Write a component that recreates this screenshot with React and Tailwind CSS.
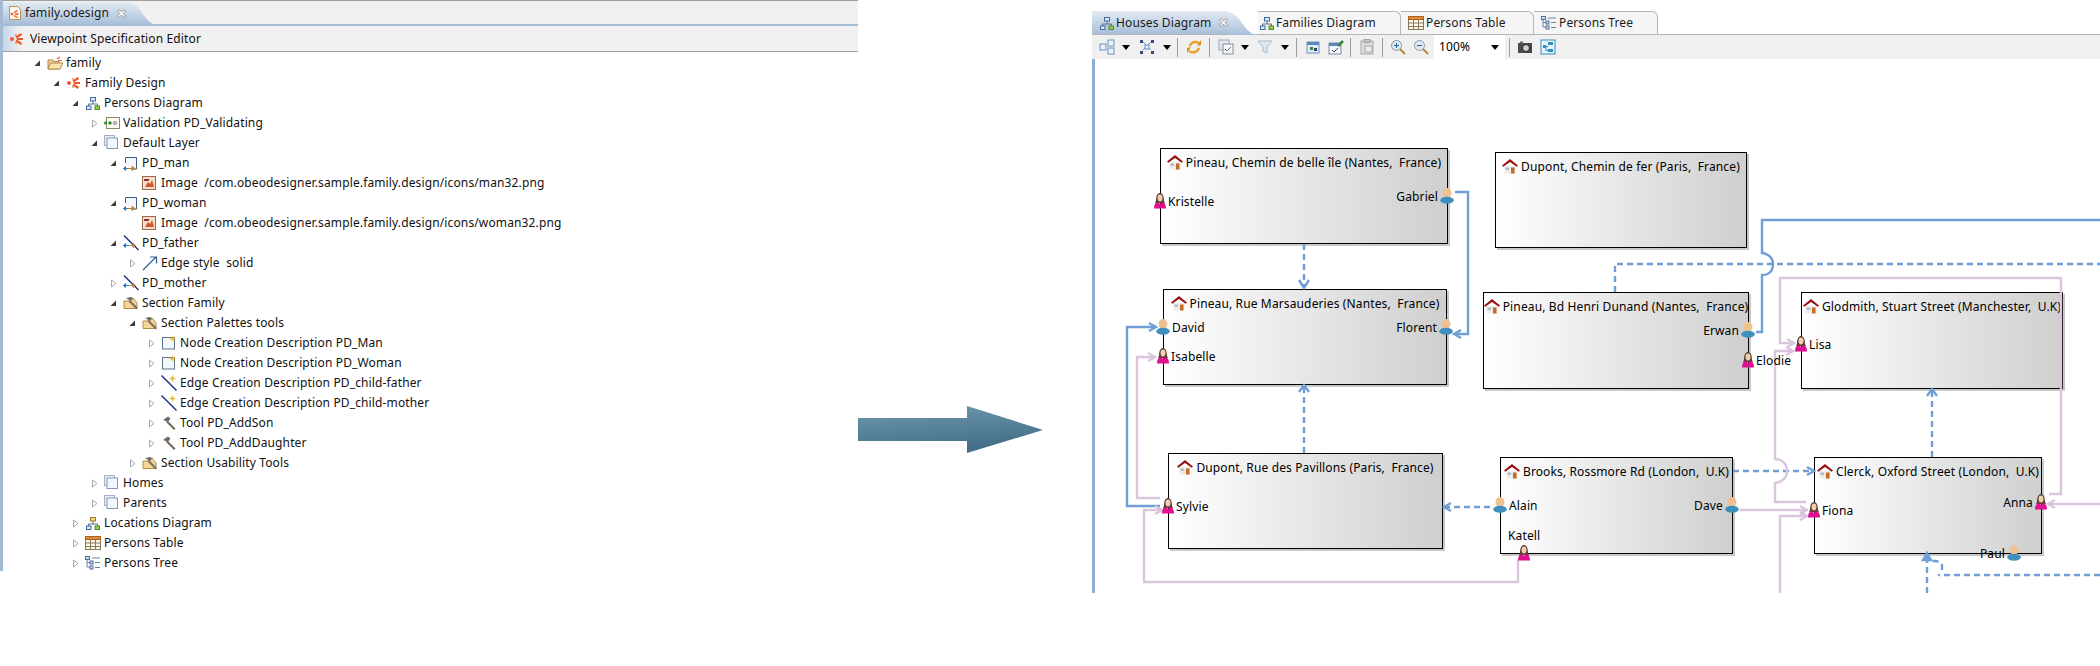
import React from 'react';

const FONT = "font-['Noto_Sans','Open_Sans',sans-serif]";
const BLUE = '#709ed6';
const PINK = '#dac6dc';

// ---- small drawn icons

const TwistyOpen = () => (
  <svg width="9" height="9" viewBox="0 0 9 9" className="shrink-0">
    <path d="M7 1.500V7H1.500z" fill="#3c3c3c" />
  </svg>
);

const TwistyClosed = () => (
  <svg width="9" height="9" viewBox="0 0 9 9" className="shrink-0">
    <path d="M2.500 1v7L7 4.500z" fill="#fff" stroke="#a8a8a8" />
  </svg>
);

const Odesign = () => (
  <svg width="16" height="16" viewBox="0 0 16 16">
    <circle cx="3" cy="8" r="2" fill="#ee5a30" />
    <path d="M7 6.500 12.500 3M8 8h6M7 9.500l5.500 3.500" stroke="#ee5a30" strokeWidth="2.200" fill="none" />
    <circle cx="7" cy="4" r="1" fill="#f58b5f" />
    <circle cx="7" cy="12" r="1" fill="#f58b5f" />
  </svg>
);

const OdesignFile = () => (
  <svg width="16" height="16" viewBox="0 0 16 16" className="shrink-0">
    <path d="M2.500 1.500h8l3 3v10h-11z" fill="#fdf6ea" stroke="#b9955d" />
    <circle cx="5" cy="9" r="1.300" fill="#ee5a30" />
    <path d="M7 7.500l3.500-2M8 9h3.500M7 10.500l3.500 2" stroke="#ee5a30" strokeWidth="1.400" />
  </svg>
);

const Folder = () => (
  <svg width="16" height="16" viewBox="0 0 16 16">
    <path d="M1 5h5l1 1.500h5V14H1z" fill="#f3cf8c" stroke="#b08a4a" />
    <path d="M1 14l2.500-6H16l-3 6z" fill="#fbe3b0" stroke="#b08a4a" />
    <path d="M10 4l3-2M11 5.500h4" stroke="#ee5a30" strokeWidth="1.200" />
  </svg>
);

const DiagramIcon = ({ amber }) => (
  <svg width="16" height="16" viewBox="0 0 16 16" className="shrink-0">
    <path d="M8 6v3M3.500 11V9h9v2" stroke="#5a6f8c" fill="none" />
    <rect x="5.500" y="2.500" width="5" height="3.500" fill={amber ? '#f6d58a' : '#dbe8f7'} stroke={amber ? '#a27a2c' : '#3e6aa0'} />
    <rect x="1.500" y="11" width="4.500" height="3.500" fill="#dbe8f7" stroke="#3e6aa0" />
    <rect x="10" y="11" width="4.500" height="3.500" fill="#8fd04f" stroke="#4c8a2a" />
  </svg>
);

const ValidationIcon = () => (
  <svg width="16" height="16" viewBox="0 0 16 16">
    <rect x="2.500" y="2.500" width="13" height="11" fill="#fbfbf4" stroke="#8a8a62" />
    <circle cx="1.500" cy="8" r="1.500" fill="#2b8a2b" />
    <circle cx="6" cy="8" r="1.700" fill="#2b8a2b" />
    <circle cx="11" cy="8" r="1.700" fill="#8c8c8c" fillOpacity="0.500" stroke="#666" strokeWidth="0.500" />
  </svg>
);

const LayerIcon = () => (
  <svg width="16" height="16" viewBox="0 0 16 16">
    <rect x="0.500" y="0.500" width="10" height="10" fill="#e9eef6" stroke="#a4b1c8" />
    <rect x="3" y="3" width="10.500" height="10.500" fill="#f0f7fd" stroke="#8898b4" />
  </svg>
);

const ContainerMapping = () => (
  <svg width="16" height="16" viewBox="0 0 16 16">
    <path d="M2.500 8V2.500h11V14H8" fill="#f3f7fc" stroke="#3f5f86" />
    <path d="M1 13.500h4M2.500 11.500l-2 2 2 2z" stroke="#1e7fd0" fill="#1e7fd0" />
    <path d="M4.500 13.500h6M9 11.500l3 2-3 2z" stroke="#b9803a" fill="#b9803a" />
  </svg>
);

const EdgeMapping = () => (
  <svg width="16" height="16" viewBox="0 0 16 16">
    <path d="M1 .5 15.500 15" stroke="#1b2f7e" strokeWidth="1.400" />
    <path d="M1 10.500h5M2.500 8.500l-2 2 2 2z" stroke="#1e7fd0" fill="#1e7fd0" />
    <path d="M6.500 10.500h5M10 8.500l2.500 2-2.500 2z" stroke="#b9803a" fill="#b9803a" />
  </svg>
);

const ImageStyle = () => (
  <svg width="14" height="14" viewBox="0 0 14 14">
    <rect x="0.500" y="0.500" width="13" height="13" fill="#f7ddc8" stroke="#9c6a4c" />
    <path d="M3 11l3-5 2 2 2-4 2 7z" fill="#d9532c" />
    <path d="M2 3h5v2H2z" fill="#8a3b2c" />
  </svg>
);

const EdgeStyle = () => (
  <svg width="16" height="16" viewBox="0 0 16 16">
    <path d="M1 15 14 2M8 2h6.500v6.500" stroke="#2a5e96" fill="none" strokeWidth="1.200" />
  </svg>
);

const Section = () => (
  <svg width="16" height="16" viewBox="0 0 16 16">
    <path d="M1 6h5l1-3h3l4 5v5.500H1z" fill="#f6d694" stroke="#b58a45" />
    <path d="M3 3l5-1 2 2-2 2z" fill="#6c6c6c" />
    <path d="M7 5l8 8-1.500 1.500-8-8z" fill="#7c6f63" />
  </svg>
);

const NodeCreation = () => (
  <svg width="16" height="16" viewBox="0 0 16 16">
    <rect x="1.500" y="2.500" width="12" height="11.500" fill="#f2f7fc" stroke="#5f7286" />
    <path d="M11.500 0l1 2.500 2.500 1-2.500 1-1 2.500-1-2.500-2.500-1 2.500-1z" fill="#e8b93a" />
  </svg>
);

const EdgeCreation = () => (
  <svg width="16" height="16" viewBox="0 0 16 16">
    <path d="M.5 .5 15.500 15.500" stroke="#1b2f7e" strokeWidth="1.400" />
    <path d="M11.500 0l1 2.500 2.500 1-2.500 1-1 2.500-1-2.500-2.500-1 2.500-1z" fill="#e8b93a" />
  </svg>
);

const Hammer = () => (
  <svg width="16" height="16" viewBox="0 0 16 16">
    <path d="M2 5l5-3.500 2.500 2L7 7z" fill="#6a6a6a" />
    <path d="M6.500 5.500l8 8L13 15 5 7z" fill="#7a6a58" />
  </svg>
);

const TableIcon = () => (
  <svg width="16" height="14" viewBox="0 0 16 14" className="shrink-0">
    <rect x="0.500" y="0.500" width="15" height="13" fill="#faf5e6" stroke="#8a7a5a" />
    <rect x="0.500" y="0.500" width="15" height="3" fill="#e08a3a" stroke="#a8641f" />
    <path d="M5.500 3.500v10M10.500 3.500v10M.5 7h15M.5 10.500h15" stroke="#8a7a5a" />
  </svg>
);

const TreeIcon = () => (
  <svg width="16" height="14" viewBox="0 0 16 14" className="shrink-0">
    <path d="M2 2v9h3M2 6.500h3" stroke="#6f8099" fill="none" />
    <rect x="0.500" y="0.500" width="4" height="3" fill="#cfe0f4" stroke="#4a6f9c" />
    <rect x="5" y="5" width="3" height="3" fill="#cfe0f4" stroke="#4a6f9c" />
    <rect x="5" y="10" width="3" height="3" fill="#cfe0f4" stroke="#4a6f9c" />
    <path d="M7 2h8M10 6.500h5M10 11.500h5" stroke="#6f8099" />
  </svg>
);

const CloseIcon = () => (
  <svg width="11" height="11" viewBox="0 0 11 11" className="shrink-0">
    <path d="M1.500 3 3 1.500l2.500 2.500L8 1.500 9.500 3 7 5.500 9.500 8 8 9.500 5.500 7 3 9.500 1.500 8 4 5.500z" fill="#fff" stroke="#8a8a8a" strokeWidth="0.900" />
  </svg>
);

const House = () => (
  <svg width="16" height="15" viewBox="0 0 16 15" className="shrink-0">
    <path d="M2.500 7v7.500h11V7z" fill="#ececec" />
    <path d="M8 3 2.500 7h11z" fill="#fff" />
    <path d="M0 6.500 8 0l8 6.500-1.300 1.300L8 3 1.300 7.800z" fill="#9a1010" />
    <rect x="9" y="8.500" width="3.500" height="6" fill="#c66a26" />
    <rect x="3.500" y="8.500" width="3.500" height="2.500" fill="#b4bcc6" />
  </svg>
);

const Man = () => (
  <svg width="14" height="16" viewBox="0 0 14 16" className="shrink-0">
    <ellipse cx="7" cy="5" rx="4.500" ry="5" fill="#eec193" />
    <ellipse cx="7" cy="12.200" rx="6.800" ry="3.500" fill="#3f8fbe" />
  </svg>
);

const Woman = () => (
  <svg width="12" height="16" viewBox="0 0 12 16" className="shrink-0">
    <path d="M2 8c0-6 2-8 4-8s4 2 4 8l1 2H1z" fill="#5a4034" />
    <ellipse cx="6" cy="5" rx="2.500" ry="3.400" fill="#f2cdb0" />
    <path d="M0 15.500c0-4 1.500-6 3.500-6.500L6 11l2.500-2c2 .5 3.500 2.500 3.500 6.500z" fill="#df0f90" />
  </svg>
);

// the selected tab with its curved right side
const ActiveTab = ({ id, bodyClass, children }) => (
  <div className="flex h-full shrink-0 items-end">
    <div className={`flex h-full shrink-0 items-center whitespace-nowrap bg-linear-to-b from-[#e4ebf4] to-[#a8bfd9] ${bodyClass}`}>{children}</div>
    <svg width="30" height="23" viewBox="0 0 30 23" className="-mb-px shrink-0">
      <defs>
        <linearGradient id={id} x1="0" y1="0" x2="0" y2="1">
          <stop offset="0" stopColor="#e4ebf4" />
          <stop offset="1" stopColor="#a8bfd9" />
        </linearGradient>
      </defs>
      <path d="M0 0C13 0 15 22 30 23H0z" fill={`url(#${id})`} />
    </svg>
  </div>
);

// ---- tree on the left

const TREE = [
  [0, 'open', Folder, 'family'],
  [1, 'open', Odesign, 'Family Design'],
  [2, 'open', DiagramIcon, 'Persons Diagram'],
  [3, 'closed', ValidationIcon, 'Validation PD_Validating'],
  [3, 'open', LayerIcon, 'Default Layer'],
  [4, 'open', ContainerMapping, 'PD_man'],
  [5, null, ImageStyle, 'Image  /com.obeodesigner.sample.family.design/icons/man32.png'],
  [4, 'open', ContainerMapping, 'PD_woman'],
  [5, null, ImageStyle, 'Image  /com.obeodesigner.sample.family.design/icons/woman32.png'],
  [4, 'open', EdgeMapping, 'PD_father'],
  [5, 'closed', EdgeStyle, 'Edge style  solid'],
  [4, 'closed', EdgeMapping, 'PD_mother'],
  [4, 'open', Section, 'Section Family'],
  [5, 'open', Section, 'Section Palettes tools'],
  [6, 'closed', NodeCreation, 'Node Creation Description PD_Man'],
  [6, 'closed', NodeCreation, 'Node Creation Description PD_Woman'],
  [6, 'closed', EdgeCreation, 'Edge Creation Description PD_child-father'],
  [6, 'closed', EdgeCreation, 'Edge Creation Description PD_child-mother'],
  [6, 'closed', Hammer, 'Tool PD_AddSon'],
  [6, 'closed', Hammer, 'Tool PD_AddDaughter'],
  [5, 'closed', Section, 'Section Usability Tools'],
  [3, 'closed', LayerIcon, 'Homes'],
  [3, 'closed', LayerIcon, 'Parents'],
  [2, 'closed', () => <DiagramIcon amber />, 'Locations Diagram'],
  [2, 'closed', TableIcon, 'Persons Table'],
  [2, 'closed', TreeIcon, 'Persons Tree'],
];

const TreeRow = ({ depth, twisty, Icon, label }) => (
  <div className="flex h-5 items-center" style={{ paddingLeft: 30 + depth * 19 }}>
    <span className="flex w-[14px] shrink-0 items-center">
      {twisty === 'open' && <TwistyOpen />}
      {twisty === 'closed' && <TwistyClosed />}
    </span>
    <span className="flex w-[19px] shrink-0 items-center"><Icon /></span>
    <span className="whitespace-pre">{label}</span>
  </div>
);

const EditorPanel = () => (
  <div className="flex h-[571px] w-[858px] shrink-0 flex-col border-l-[3px] border-[#a3b9d4]">
    <div className="h-[26px] shrink-0 border-t border-b-[2px] border-t-[#a0a0a0] border-b-[#a3bbd6] bg-[#f0f0f0] pt-px">
      <ActiveTab id="tabLeft" bodyClass="w-[125px] pl-[4px] text-[#1a1a1a]">
        <OdesignFile />
        <span className="ml-[2px]">family.odesign</span>
        <span className="ml-[7px]"><CloseIcon /></span>
      </ActiveTab>
    </div>
    <div className="flex h-[26px] shrink-0 items-center gap-[5px] border-b border-[#a0a0a0] bg-[#f0f0f0] bg-[linear-gradient(to_right,#c4d5e8,#f0f0f0_18px)] pl-[6px]">
      <Odesign />
      <span>Viewpoint Specification Editor</span>
    </div>
    <div className="shrink-0 pt-[1px]">
      {TREE.map(([depth, twisty, Icon, label], i) => (
        <TreeRow key={i} depth={depth} twisty={twisty} Icon={Icon} label={label} />
      ))}
    </div>
  </div>
);

// ---- arrow in the middle

const BigArrow = () => (
  <svg width="186" height="48" viewBox="0 0 186 48" className="mt-[406px] shrink-0">
    <defs>
      <linearGradient id="bigArrow" x1="0" y1="0" x2="0.300" y2="1">
        <stop offset="0" stopColor="#6e9ab0" />
        <stop offset="1" stopColor="#456d87" />
      </linearGradient>
    </defs>
    <path d="M0 12H109V0L185 24 109 47V35H0z" fill="url(#bigArrow)" />
  </svg>
);

// ---- diagram editor on the right

const InactiveTab = ({ children, className }) => (
  <div className={`flex h-full shrink-0 items-center gap-px whitespace-nowrap rounded-tr-md border-r border-[#b5b5b5] bg-[#f5f5f5] ${className}`}>{children}</div>
);

const ToolIcon = ({ children, className }) => (
  <svg width="16" height="16" viewBox="0 0 16 16" className={`shrink-0 ${className}`}>{children}</svg>
);

const Caret = ({ className }) => (
  <span className={`h-0 w-0 shrink-0 border-x-[4px] border-t-[5px] border-x-transparent border-t-black ${className}`} />
);
const Sep = ({ className }) => <span className={`h-[19px] w-px shrink-0 bg-[#9c9c9c] ${className}`} />;

const Toolbar = () => (
  <div className="flex h-[24px] items-center bg-[#f0f0f0] pl-[7px]">
    <ToolIcon><rect x="1" y="5" width="6" height="6" fill="#eaf2fb" stroke="#6d93bd" /><rect x="9" y="1" width="6" height="6" fill="#eaf2fb" stroke="#6d93bd" /><rect x="9" y="9" width="6" height="6" fill="#eaf2fb" stroke="#6d93bd" /></ToolIcon>
    <Caret className="ml-[7px]" />
    <ToolIcon className="ml-[9px]"><path d="M4 3l8 8M12 3 4 11" stroke="#6d93bd" /><rect x="1" y="1" width="3" height="3" fill="#34517c" /><rect x="12" y="1" width="3" height="3" fill="#34517c" /><rect x="6" y="6" width="4" height="4" fill="#eaf2fb" stroke="#6d93bd" /><rect x="1" y="12" width="3" height="3" fill="#34517c" /><rect x="12" y="12" width="3" height="3" fill="#34517c" /></ToolIcon>
    <Caret className="ml-[8px]" />
    <Sep className="ml-[6px]" />
    <ToolIcon className="ml-[8px]"><path d="M13 4A6.500 6.500 0 0 0 3.500 7M3 12a6.500 6.500 0 0 0 10-3" stroke="#e8a52a" strokeWidth="2.500" fill="none" /><path d="M11 7l4-1V1zM5 8l-4 1v5z" fill="#d98c1a" /></ToolIcon>
    <Sep className="ml-[7px]" />
    <ToolIcon className="ml-[8px]"><rect x="1" y="1" width="10" height="10" fill="#e3e8ef" stroke="#9aa6b8" /><rect x="5" y="5" width="10" height="10" fill="#f6f8fb" stroke="#7d8ba0" /><path d="M7 10l2 2 4-4" stroke="#5a7a5a" fill="none" /></ToolIcon>
    <Caret className="ml-[7px]" />
    <ToolIcon className="ml-[8px]"><path d="M1 2h14L10 8v6l-4-2V8z" fill="#dbe8f3" stroke="#a8bccf" /></ToolIcon>
    <Caret className="ml-[8px]" />
    <Sep className="ml-[7px]" />
    <ToolIcon className="ml-[8px]"><rect x="2" y="3" width="12" height="11" fill="#dfeaf6" stroke="#6d93bd" /><rect x="2" y="3" width="12" height="3" fill="#5c87b8" /><rect x="5" y="8" width="3" height="3" fill="#3a8a3a" /><rect x="9" y="9" width="3" height="3" fill="#25416d" /></ToolIcon>
    <ToolIcon className="ml-[7px]"><rect x="1" y="4" width="12" height="11" fill="#f4f7fb" stroke="#7d8ba0" /><rect x="1" y="4" width="12" height="3" fill="#5c87b8" /><path d="M4 11l2 2 4-4" stroke="#444" fill="none" /><path d="M9 6l5-5 2 2-5 5z" fill="#3a8a3a" /></ToolIcon>
    <Sep className="ml-[6px]" />
    <ToolIcon className="ml-[8px]"><rect x="2" y="2" width="12" height="13" fill="#dcdcdc" stroke="#a8a8a8" /><rect x="5" y="0.500" width="6" height="3" fill="#c4c4c4" stroke="#a0a0a0" /><rect x="6" y="7" width="7" height="6" fill="#ececec" stroke="#a8a8a8" /></ToolIcon>
    <Sep className="ml-[7px]" />
    <ToolIcon className="ml-[7px]"><circle cx="6.500" cy="6.500" r="5" fill="#dfe9f4" stroke="#8a9aae" /><path d="M4 6.500h5M6.500 4v5" stroke="#2c5f9c" /><path d="M10 10l5 5" stroke="#b5893f" strokeWidth="2" /></ToolIcon>
    <ToolIcon className="ml-[7px]"><circle cx="6.500" cy="6.500" r="5" fill="#dfe9f4" stroke="#8a9aae" /><path d="M4 6.500h5" stroke="#2c5f9c" /><path d="M10 10l5 5" stroke="#b5893f" strokeWidth="2" /></ToolIcon>
    <div className="ml-[5px] flex h-[24px] w-[71px] shrink-0 items-center bg-white pl-[5px] text-black">
      <span className="flex-1">100%</span>
      <Caret className="mr-[6px]" />
    </div>
    <Sep className="ml-[4px]" />
    <ToolIcon className="ml-[7px]"><rect x="1" y="4" width="14" height="10" fill="#4a4a4a" /><rect x="3" y="2.500" width="3" height="2" fill="#6a6a6a" /><circle cx="9" cy="9" r="3.500" fill="#c9d2dc" stroke="#222" /></ToolIcon>
    <ToolIcon className="ml-[7px]"><rect x="1" y="1" width="14" height="14" fill="#e8f3fb" stroke="#2f8fb8" /><rect x="8" y="3" width="5" height="3" fill="#2f8fb8" /><rect x="3" y="6" width="3" height="3" fill="#2f8fb8" /><rect x="8" y="10" width="5" height="3" fill="#2f8fb8" /><path d="M6 7.500h2M6 7.500v4h2" stroke="#2f8fb8" fill="none" /></ToolIcon>
  </div>
);

const Node = ({ title, className }) => (
  <div className={`absolute flex justify-center border border-black bg-linear-to-r from-white to-[#cfcfcf] pt-[5px] shadow-[2px_2px_0_#c8c8c8] ${className}`}>
    <div className="flex h-[17px] items-center gap-[3px] whitespace-pre text-black">
      <House />
      <span>{title}</span>
    </div>
  </div>
);

const Person = ({ name, kind, className, labelFirst }) => {
  const icon = kind === 'm' ? <Man /> : <Woman />;
  const label = <span className="pt-[2px]">{name}</span>;
  return (
    <div className={`absolute flex h-4 items-center gap-[2px] text-black ${className}`}>
      {labelFirst && label}
      {icon}
      {!labelFirst && label}
    </div>
  );
};

const Edges = () => (
  <svg width="1005" height="534" viewBox="1095 59 1005 534" className="absolute left-0 top-0" fill="none" strokeWidth="2.400">
    <g stroke={BLUE}>
      <path d="M1304 244V288" strokeDasharray="6 4" />
      <path d="M1299 280l5 8 5-8" />
      <path d="M1455 192H1468V334H1455" />
      <path d="M1461 330l-7 4 7 4" />
      <path d="M1160 506H1127V327H1156" />
      <path d="M1149 323l7 4-7 4" />
      <path d="M1490 507H1444" strokeDasharray="6 4" />
      <path d="M1451 503l-7 4 7 4" />
      <path d="M1304 453V385" strokeDasharray="6 4" />
      <path d="M1299 392l5-7 5 7" />
      <path d="M1615 292V264H2100" strokeDasharray="6 4" />
      <path d="M1756 332H1762V275C1762 275 1773 276 1773 264C1773 254 1762 253 1762 253V220H2100" />
      <path d="M1733 471H1814" strokeDasharray="6 4" />
      <path d="M1807 467l7 4-7 4" />
      <path d="M1932 457V389" strokeDasharray="6 4" />
      <path d="M1927 396l5-7 5 7" />
      <path d="M2100 575H1938M1942 570V566C1942 562 1938 561 1934 561H1928" strokeDasharray="6 4" />
      <path d="M1927 593V556" strokeDasharray="6 4" />
      <path d="M1923 560l4-7 4 7z" fill={BLUE} />
    </g>
    <g stroke={PINK}>
      <path d="M1160 498H1137V357H1155" />
      <path d="M1148 353l7 4-7 4" />
      <path d="M1518 560V582H1144V510H1162" />
      <path d="M1155 506l7 4-7 4" />
      <path d="M2049 494H2061V278H1780V343H1794" />
      <path d="M1787 339l7 4-7 4" />
      <path d="M1793 351H1775V459C1775 459 1787 459 1787 471C1787 482 1775 483 1775 483V502H1806" />
      <path d="M1786 347l7 4-7 4" />
      <path d="M1740 510H1807" />
      <path d="M1800 506l7 4-7 4" />
      <path d="M1780 593V516H1807" />
      <path d="M1800 512l7 4-7 4" />
      <path d="M2100 504H2048" />
      <path d="M2055 500l-7 4 7 4" />
    </g>
  </svg>
);

const Diagram = () => (
  <div className="relative h-[534px] border-l-[3px] border-[#8fb0d6] bg-white">
    <Node title="Pineau, Chemin de belle île (Nantes,  France)" className="left-[65px] top-[89px] h-[96px] w-[288px]" />
    <Node title="Pineau, Rue Marsauderies (Nantes,  France)" className="left-[68px] top-[230px] h-[96px] w-[284px]" />
    <Node title="Dupont, Chemin de fer (Paris,  France)" className="left-[400px] top-[93px] h-[96px] w-[252px]" />
    <Node title="Pineau, Bd Henri Dunand (Nantes,  France)" className="left-[388px] top-[233px] h-[97px] w-[266px]" />
    <Node title="Glodmith, Stuart Street (Manchester,  U.K)" className="left-[706px] top-[233px] h-[97px] w-[262px]" />
    <Node title="Dupont, Rue des Pavillons (Paris,  France)" className="left-[73px] top-[394px] h-[96px] w-[275px]" />
    <Node title="Brooks, Rossmore Rd (London,  U.K)" className="left-[405px] top-[398px] h-[97px] w-[233px]" />
    <Node title="Clerck, Oxford Street (London,  U.K)" className="left-[719px] top-[398px] h-[97px] w-[228px]" />
    <Edges />
    <Person name="Kristelle" kind="w" className="left-[59px] top-[134px]" />
    <Person name="Gabriel" kind="m" labelFirst className="right-[646px] top-[129px]" />
    <Person name="David" kind="m" className="left-[61px] top-[260px]" />
    <Person name="Florent" kind="m" labelFirst className="right-[647px] top-[260px]" />
    <Person name="Isabelle" kind="w" className="left-[62px] top-[289px]" />
    <Person name="Sylvie" kind="w" className="left-[67px] top-[439px]" />
    <Person name="Alain" kind="m" className="left-[398px] top-[438px]" />
    <span className="absolute left-[413px] top-[469px] leading-4 text-black">Katell</span>
    <Person name="" kind="w" className="left-[423px] top-[486px]" />
    <Person name="Erwan" kind="m" labelFirst className="right-[345px] top-[263px]" />
    <Person name="Elodie" kind="w" className="left-[647px] top-[293px]" />
    <Person name="Lisa" kind="w" className="left-[700px] top-[277px]" />
    <Person name="Dave" kind="m" labelFirst className="right-[361px] top-[438px]" />
    <Person name="Fiona" kind="w" className="left-[713px] top-[443px]" />
    <Person name="Anna" kind="w" labelFirst className="right-[53px] top-[435px]" />
    <Person name="Paul" kind="m" labelFirst className="right-[79px] top-[486px]" />
  </div>
);

const DiagramPanel = () => (
  <div className="ml-[48px] mt-[11px] flex-1">
    <div className="flex h-[24px] items-stretch border-b border-[#b5b5b5] text-[#1a1a1a]">
      <ActiveTab id="tabRight" bodyClass="w-[136px] pl-[7px]">
        <DiagramIcon />
        <span className="ml-px">Houses Diagram</span>
        <span className="ml-[7px]"><CloseIcon /></span>
      </ActiveTab>
      <InactiveTab className="w-[143px] border-t pl-px">
        <DiagramIcon />
        <span>Families Diagram</span>
      </InactiveTab>
      <InactiveTab className="w-[133px] border-t pl-[7px]">
        <TableIcon />
        <span className="ml-px">Persons Table</span>
      </InactiveTab>
      <InactiveTab className="w-[124px] border-t pl-[7px]">
        <TreeIcon />
        <span className="ml-px">Persons Tree</span>
      </InactiveTab>
    </div>
    <Toolbar />
    <Diagram />
  </div>
);

export default function App() {
  return (
    <div className={`flex h-[666px] w-[2100px] items-start overflow-hidden bg-white text-[12px] leading-4 tracking-[0.13px] text-[#111] ${FONT}`}>
      <EditorPanel />
      <BigArrow />
      <DiagramPanel />
    </div>
  );
}
